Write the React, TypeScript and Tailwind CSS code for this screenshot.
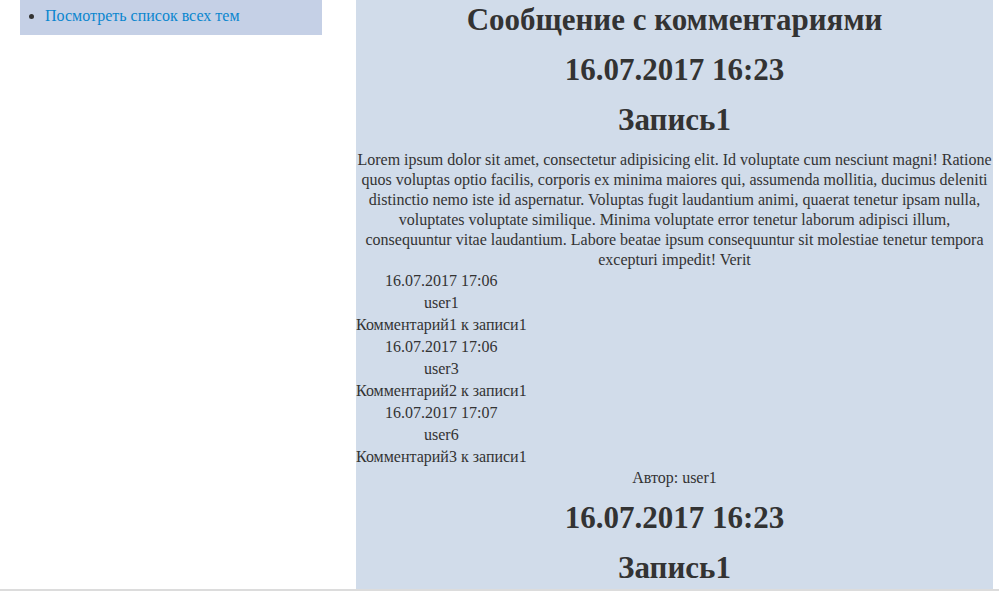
import { FC } from "react"

const comments = [
  { date: '16.07.2017 17:06', user: 'user1', text: 'Комментарий1 к записи1' },
  { date: '16.07.2017 17:06', user: 'user3', text: 'Комментарий2 к записи1' },
  { date: '16.07.2017 17:07', user: 'user6', text: 'Комментарий3 к записи1' },
]

const lorem = 'Lorem ipsum dolor sit amet, consectetur adipisicing elit. Id voluptate cum nesciunt magni! Ratione quos voluptas optio facilis, corporis ex minima maiores qui, assumenda mollitia, ducimus deleniti distinctio nemo iste id aspernatur. Voluptas fugit laudantium animi, quaerat tenetur ipsam nulla, voluptates voluptate similique. Minima voluptate error tenetur laborum adipisci illum, consequuntur vitae laudantium. Labore beatae ipsum consequuntur sit molestiae tenetur tempora excepturi impedit! Verit'

const Heading: FC<{ children: React.ReactNode; first?: boolean }> = ({ children, first }) => (
  <h2 className={`${first ? '' : 'mt-[10px]'} h-[40px] leading-[40px] text-[31px] font-bold text-[#333]`}>{children}</h2>
)

const App: FC = () => {
  return (
    <div className="h-[591px] overflow-hidden bg-white font-['Liberation_Serif',serif] text-[#333]">
      <div className="flex h-[591px] overflow-hidden border-b-2 border-[#dcdcdc] pl-[20px]">
        <aside className="w-[302px] self-start bg-[#c5d0e6] h-[35px]">
          <ul className="list-disc pl-[25px] pt-[6px] text-[16px] leading-[20px]">
            <li className="marker:text-[#333]">
              <a href="#" className="text-[#0a86cf]">Посмотреть список всех тем</a>
            </li>
          </ul>
        </aside>

        <main className="ml-[34px] w-[637px] bg-[#d1dcea] text-center">
          <Heading first>Сообщение с комментариями</Heading>
          <Heading>16.07.2017 16:23</Heading>
          <Heading>Запись1</Heading>

          <p className="mt-[10px] text-[16px] leading-[20px]">{lorem}</p>

          <div className="w-fit text-[16px] leading-[22px]">
            {comments.map((c, i) => (
              <div key={i}>
                <div>{c.date}</div>
                <div>{c.user}</div>
                <div>{c.text}</div>
              </div>
            ))}
          </div>

          <p className="text-[16px] leading-[20px]">Автор: user1</p>

          <Heading>16.07.2017 16:23</Heading>
          <Heading>Запись1</Heading>
        </main>
      </div>
    </div>
  )
}

export default App
